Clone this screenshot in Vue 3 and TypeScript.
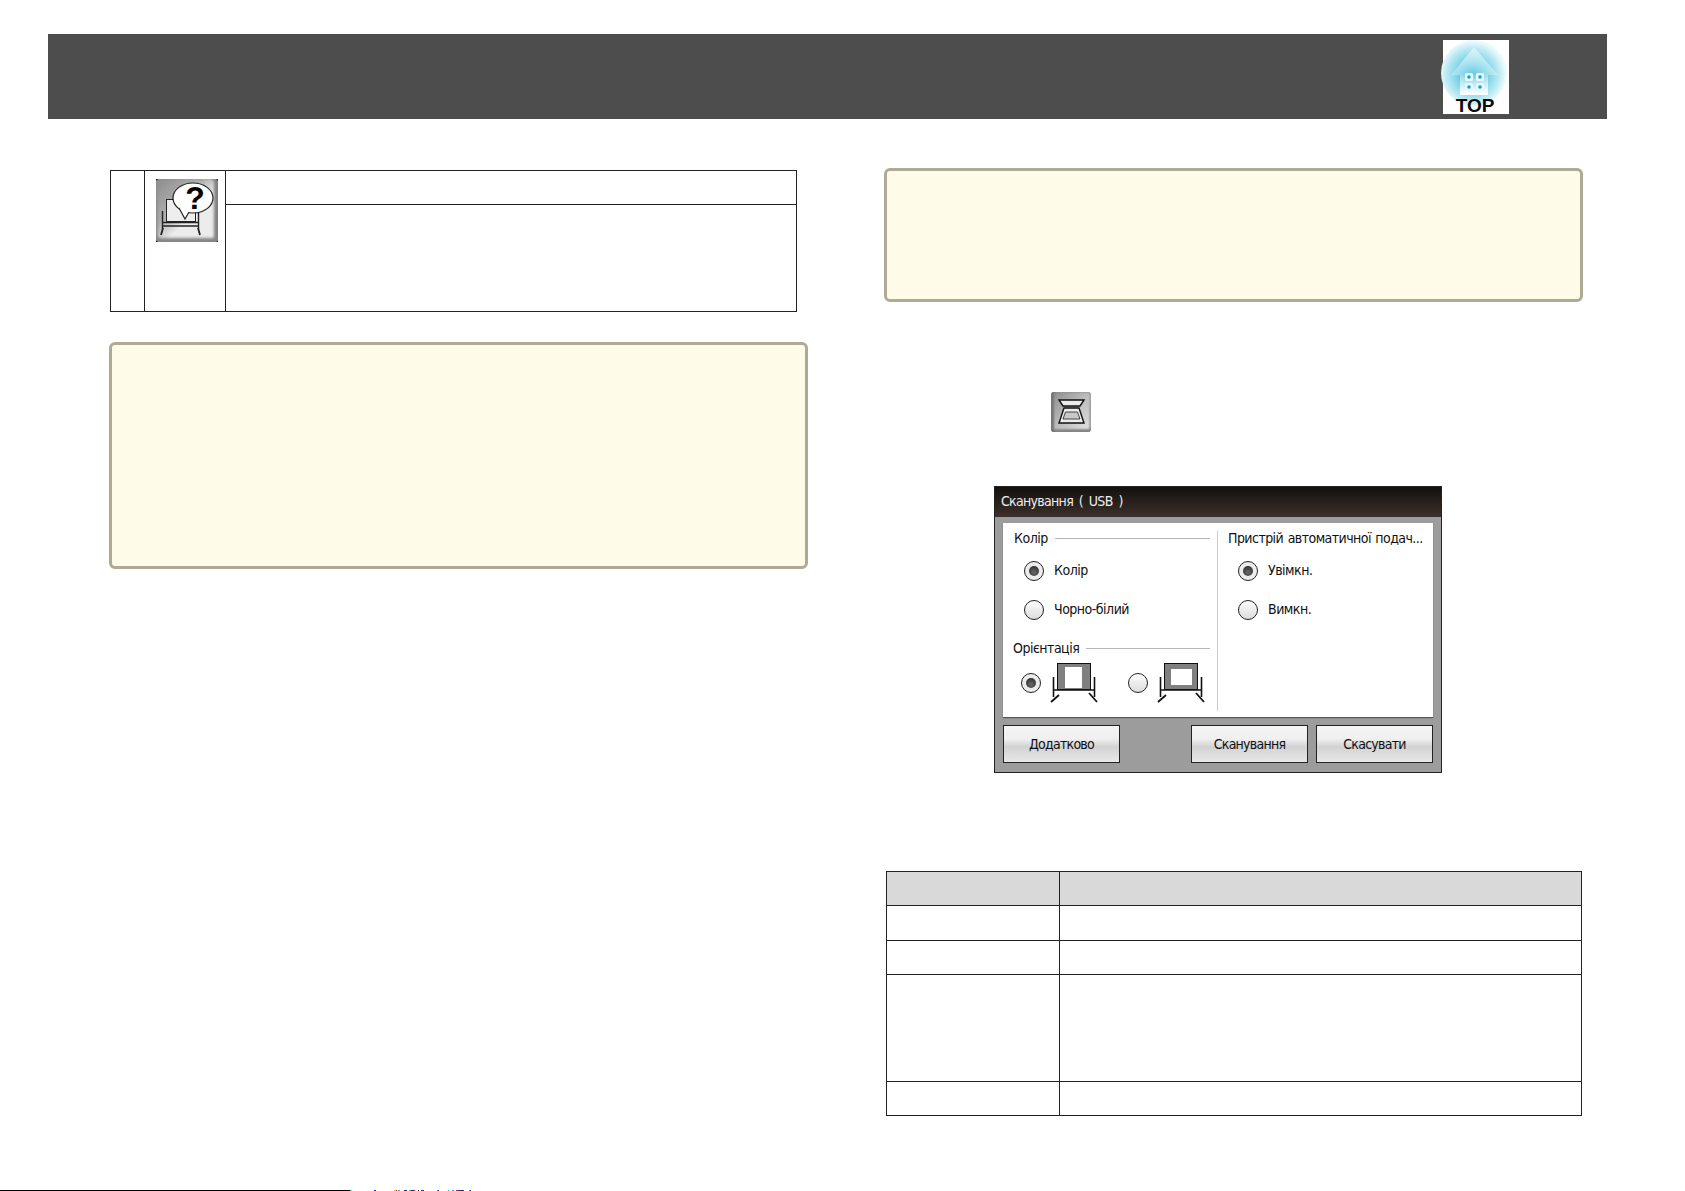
<script setup lang="ts">
const specks = [
  { x: 350, w: 1, c: '#20c060' }, { x: 351, w: 1, c: '#d8d020' }, { x: 374, w: 2, c: '#2233cc' },
  { x: 394, w: 2, c: '#d8c820' }, { x: 396, w: 1, c: '#cc2222' }, { x: 398, w: 2, c: '#20b8c8' },
  { x: 404, w: 3, c: '#223388' }, { x: 409, w: 2, c: '#20b8c8' }, { x: 411, w: 3, c: '#222266' },
  { x: 414, w: 1, c: '#cc2266' }, { x: 418, w: 1, c: '#222222' }, { x: 421, w: 1, c: '#cc2222' },
  { x: 422, w: 2, c: '#2233cc' }, { x: 437, w: 1, c: '#e08020' }, { x: 438, w: 1, c: '#2233cc' },
  { x: 448, w: 1, c: '#20c8c8' }, { x: 452, w: 2, c: '#20b8c8' }, { x: 456, w: 2, c: '#cc2266' },
  { x: 458, w: 2, c: '#2233aa' }, { x: 460, w: 3, c: '#222266' }, { x: 463, w: 1, c: '#cc2222' },
  { x: 469, w: 1, c: '#e08020' }, { x: 470, w: 1, c: '#2233cc' },
]
const options = [
  { label: 'Колір', on: true },
  { label: 'Чорно-білий', on: false },
]
const feeder = [
  { label: 'Увімкн.', on: true },
  { label: 'Вимкн.', on: false },
]
</script>

<template>
  <div class="page">
    <header class="topbar">
      <div class="top-logo">
        <svg class="top-house" viewBox="0 0 66 56" width="66" height="56">
          <defs>
            <radialGradient id="glow" cx="48%" cy="52%" r="50%">
              <stop offset="0" stop-color="#1fb0d6" />
              <stop offset="0.4" stop-color="#6ccde5" />
              <stop offset="0.8" stop-color="#bdeaf3" />
              <stop offset="1" stop-color="#ecfafc" />
            </radialGradient>
            <linearGradient id="body" x1="0" y1="0" x2="0" y2="1">
              <stop offset="0" stop-color="#e0f6fa" stop-opacity="0.8" />
              <stop offset="0.55" stop-color="#e6f8fb" stop-opacity="0.35" />
              <stop offset="1" stop-color="#ffffff" />
            </linearGradient>
          </defs>
          <circle cx="31" cy="33" r="33" fill="url(#glow)" />
          <path d="M31 7 L55 35 H45 V55 H17 V35 H8 Z" fill="url(#body)" />
          <g fill="#e6f8fb">
            <rect x="22" y="33" width="8" height="8" rx="1.5" />
            <rect x="33" y="33" width="8" height="8" rx="1.5" />
            <rect x="22" y="43" width="8" height="8" rx="1.5" />
            <rect x="33" y="43" width="8" height="8" rx="1.5" />
          </g>
          <g fill="#1aa0c8">
            <circle cx="26" cy="37" r="1.8" /><circle cx="37" cy="37" r="1.8" />
            <circle cx="26" cy="47" r="1.8" /><circle cx="37" cy="47" r="1.8" />
          </g>
        </svg>
        <span class="top-text">TOP</span>
      </div>
    </header>

    <main class="columns">
      <section class="col">
        <table class="tbl tbl-left">
          <colgroup><col class="c1" /><col class="c2" /><col /></colgroup>
          <tbody>
            <tr class="r1">
              <td rowspan="2"></td>
              <td rowspan="2" class="icon-cell">
                <div class="tool-icon">
                  <div class="tool-face"></div>
                  <svg viewBox="0 0 62 63" width="62" height="63">
                    <path d="M6.5 32 V50 M42.5 32 V50 M6.5 43.5 H42.5 M6.5 47 H42.5" stroke="#222" stroke-width="1.4" fill="none" />
                    <path d="M7 49 L5 56 M42 49 L44 56" stroke="#222" stroke-width="1.8" fill="none" />
                    <rect x="10.5" y="20.5" width="29" height="22" fill="#eee" stroke="#222" stroke-width="1" />
                    <ellipse cx="37" cy="19" rx="20" ry="15" fill="#fff" stroke="#222" stroke-width="1.2" />
                    <path d="M23 29 L29 40 L33 33" fill="#fff" stroke="#222" stroke-width="1.2" />
                    <path d="M23.5 28 L33 33 L40 31 L30 24 Z" fill="#fff" />
                  </svg>
                  <span class="q-mark">?</span>
                </div>
              </td>
              <td></td>
            </tr>
            <tr class="r2"><td></td></tr>
          </tbody>
        </table>
        <div class="note note-left"></div>
      </section>

      <section class="col">
        <div class="note note-right"></div>

        <div class="scan-icon">
          <svg viewBox="0 0 40 40" width="40" height="40">
            <path d="M8 8 H33 L29 14 H12 Z" fill="#ececec" stroke="#111" stroke-width="1.4" />
            <path d="M13 16 H28 L33 31 H8 Z" fill="#ececec" stroke="#111" stroke-width="1.4" />
            <path d="M14.5 20 H26.5 L29 27 H12 Z" fill="#c8c8c8" stroke="#222" stroke-width="0.8" />
          </svg>
        </div>

        <div class="dialog">
          <div class="dlg-title">Сканування ( USB )</div>
          <div class="dlg-panel">
            <div class="pane pane-a">
              <div class="legend"><span>Колір</span><i></i></div>
              <div v-for="o in options" :key="o.label" class="opt">
                <span class="radio" :class="{ on: o.on }"></span>
                <span class="opt-label">{{ o.label }}</span>
              </div>
              <div class="legend legend-2"><span>Орієнтація</span><i></i></div>
              <div class="orient">
                <span class="radio on"></span>
                <svg class="stand" viewBox="0 0 50 40" width="50" height="40">
                  <rect x="7.5" y="0.5" width="33" height="26" fill="#808080" stroke="#111" />
                  <rect x="15" y="4" width="17" height="21" fill="#fff" />
                  <path d="M3.5 14 V34 M44.5 14 V34 M4 27 H44" stroke="#111" stroke-width="1.6" fill="none" />
                  <path d="M9 32 L1 39 M39 30 L47 39" stroke="#111" stroke-width="1.8" fill="none" />
                </svg>
                <span class="radio radio-2"></span>
                <svg class="stand" viewBox="0 0 50 40" width="50" height="40">
                  <rect x="7.5" y="0.5" width="33" height="26" fill="#808080" stroke="#111" />
                  <rect x="14" y="6" width="21" height="16" fill="#fff" />
                  <path d="M3.5 14 V34 M44.5 14 V34 M4 27 H44" stroke="#111" stroke-width="1.6" fill="none" />
                  <path d="M9 32 L1 39 M39 30 L47 39" stroke="#111" stroke-width="1.8" fill="none" />
                </svg>
              </div>
            </div>
            <div class="pane pane-b">
              <div class="legend feed-head"><span>Пристрій автоматичної подач...</span></div>
              <div v-for="o in feeder" :key="o.label" class="opt">
                <span class="radio" :class="{ on: o.on }"></span>
                <span class="opt-label">{{ o.label }}</span>
              </div>
            </div>
          </div>
          <div class="dlg-buttons">
            <button class="btn">Додатково</button>
            <span class="spacer"></span>
            <button class="btn">Сканування</button>
            <button class="btn">Скасувати</button>
          </div>
        </div>

        <table class="tbl tbl-right">
          <colgroup><col class="c3" /><col /></colgroup>
          <tbody>
            <tr class="head"><td></td><td></td></tr>
            <tr class="rm"><td></td><td></td></tr>
            <tr class="rs"><td></td><td></td></tr>
            <tr class="rl"><td></td><td></td></tr>
            <tr class="rs"><td></td><td></td></tr>
          </tbody>
        </table>
      </section>
    </main>

    <footer class="foot">
      <i v-for="s in specks" :key="s.x" class="speck" :style="{ left: s.x + 'px', width: s.w + 'px', background: s.c }"></i>
    </footer>
  </div>
</template>

<style>
html, body { margin: 0; background: #fff; }
</style>

<style scoped>
.page {
  width: 1685px;
  height: 1191px;
  display: flex;
  flex-direction: column;
  overflow: hidden;
  background: #fff;
  font-family: "DejaVu Sans", "Noto Sans", sans-serif;
  font-stretch: condensed;
}
.topbar {
  box-sizing: border-box;
  flex: none;
  width: 1559px;
  height: 85px;
  margin: 34px 0 0 48px;
  padding: 6px 0 0 1395px;
  background: #4d4d4d;
}
.top-logo {
  position: relative;
  width: 66px;
  height: 74px;
  background: #fff;
  display: flex;
  flex-direction: column;
  align-items: center;
}
.top-house { flex: none; display: block; overflow: visible; }
.top-text {
  font-family: "Liberation Sans", sans-serif;
  font-stretch: normal;
  font-weight: 700;
  font-size: 19px;
  line-height: 20px;
  color: #0b0b0b;
  position: relative;
  left: -1px;
}
.columns {
  flex: none;
  display: grid;
  grid-template-columns: 699px 699px;
  column-gap: 76px;
  padding-left: 109px;
  margin-top: 49px;
}
.col { display: flex; flex-direction: column; align-items: flex-start; }
.tbl { border-collapse: collapse; table-layout: fixed; }
.tbl td { border: 1px solid #222; padding: 0; }
.tbl-left { width: 687px; margin: 2px 0 0 1px; }
.c1 { width: 34px; }
.c2 { width: 81px; }
.r1 { height: 34px; }
.r2 { height: 107px; }
.icon-cell { vertical-align: top; padding: 8px 0 0 11px !important; }
.tool-icon {
  position: relative;
  width: 62px;
  height: 63px;
  background: #222;
}
.tool-face {
  position: absolute;
  inset: 0;
  border-radius: 4px;
  background: linear-gradient(135deg, #8c8c8c 0%, #b0b0b0 38%, #ececec 58%, #ececec 100%);
  box-shadow: inset 0 -5px 3px -1px #858585, inset 3px 0 3px -1px #929292, inset -5px 0 3px -1px #808080;
}
.tool-icon svg { display: block; position: relative; }
.q-mark {
  position: absolute;
  left: 29px;
  top: 2px;
  width: 20px;
  text-align: center;
  font-family: "Liberation Sans", sans-serif;
  font-stretch: normal;
  font-weight: 700;
  font-size: 32px;
  line-height: 34px;
  color: #000;
}
.note {
  box-sizing: border-box;
  width: 699px;
  background: #fffbe9;
  border: 3px solid #aeaa96;
  border-radius: 6px;
}
.note-left { height: 227px; margin-top: 30px; }
.note-right { height: 134px; }
.scan-icon {
  width: 40px;
  height: 40px;
  margin: 90px 0 0 167px;
  background: linear-gradient(135deg, #8a8a8a 0%, #b8b8b8 45%, #e6e6e6 100%);
  border-radius: 3px;
  box-shadow: inset 3px 0 2px #777, inset 0 -3px 2px #8a8a8a, inset -2px 0 2px #aaa;
}
.scan-icon svg { display: block; }
.dialog {
  box-sizing: border-box;
  width: 448px;
  height: 287px;
  margin: 54px 0 0 110px;
  border: 1px solid #222;
  background: #9c9c9c;
  display: flex;
  flex-direction: column;
  font-size: 14px;
  letter-spacing: -0.5px;
  color: #111;
}
.dlg-title {
  flex: none;
  height: 30px;
  line-height: 29px;
  padding-left: 6px;
  color: #eee;
  font-size: 14px;
  letter-spacing: -0.7px;
  word-spacing: 2.5px;
  background: linear-gradient(180deg, #14100e 0%, #3c302b 100%);
}
.dlg-panel {
  flex: none;
  width: 430px;
  height: 194px;
  margin: 6px 0 0 8px;
  background: #fff;
  box-shadow: 0 1px 1px #555;
  display: grid;
  grid-template-columns: 214px 1fr;
  box-sizing: border-box;
  padding: 8px 0 6px;
}
.pane-a { padding: 0 7px 0 11px; }
.pane-b { border-left: 1px solid #ccc; padding-left: 10px; }
.pane > .legend:first-child { margin-top: -1px; }
.legend {
  display: flex;
  align-items: center;
  gap: 7px;
  height: 16px;
  white-space: nowrap;
}
.feed-head { word-spacing: 1px; letter-spacing: -0.55px; }
.legend i { flex: 1; height: 1px; background: #b5b5b5; }
.legend-2 { margin-top: 20px; margin-left: -1px; }
.opt {
  display: flex;
  align-items: center;
  gap: 10px;
  height: 20px;
  margin: 15px 0 0 10px;
}
.opt + .opt { margin-top: 19px; }
.opt-label { position: relative; top: -1px; }
.radio {
  flex: none;
  box-sizing: border-box;
  position: relative;
  width: 20px;
  height: 20px;
  border-radius: 50%;
  border: 1px solid #222;
  background: linear-gradient(180deg, #fdfdfd 0%, #dcdcdc 100%);
}
.radio.on { background: #ececec; }
.radio.on::after {
  content: "";
  position: absolute;
  left: 4px;
  top: 4px;
  width: 10px;
  height: 10px;
  border-radius: 50%;
  background: radial-gradient(circle at 50% 65%, #6a6a6a, #222);
}
.orient {
  display: flex;
  align-items: center;
  margin: 7px 0 0 7px;
  height: 40px;
}
.radio-2 { margin-left: 28px; }
.stand { flex: none; margin-left: 9px; }
.dlg-buttons {
  flex: none;
  display: flex;
  gap: 8px;
  margin: 8px 0 0 8px;
  width: 430px;
}
.spacer { flex: 1; }
.btn {
  box-sizing: border-box;
  width: 117px;
  height: 38px;
  padding: 0;
  border: 1px solid #222;
  border-radius: 0;
  font: inherit;
  font-size: 14px;
  letter-spacing: -0.75px;
  color: #111;
  background: linear-gradient(180deg, #f4f4f4 0%, #f0f0f0 35%, #d2d2d2 58%, #e8e8e8 100%);
}
.tbl-right { width: 696px; margin: 98px 0 0 2px; }
.c3 { width: 173px; }
.head { height: 34px; background: #d9d9d9; }
.rs { height: 34px; }
.rm { height: 35px; }
.rl { height: 107px; }
.foot {
  position: relative;
  margin-top: auto;
  height: 1px;
  flex: none;
  width: 350px;
  background: #000;
}
.speck { position: absolute; top: 0; height: 1px; }
</style>
